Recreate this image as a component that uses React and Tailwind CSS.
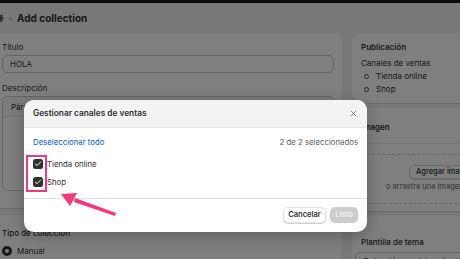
import { Check, X } from 'lucide-react'

function Card({ className = '', children }) {
  return (
    <div className={`bg-white rounded-[8px] shadow-[0_1px_0_rgba(0,0,0,0.12)] ${className}`}>
      {children}
    </div>
  )
}

function Checkbox() {
  return (
    <div className="w-[10px] h-[10px] rounded-[2.5px] bg-[#303030] flex items-center justify-center">
      <Check size={8} strokeWidth={3} className="text-white" />
    </div>
  )
}

export default function App() {
  const channels = ['Tienda online', 'Shop']

  return (
    <div className="relative w-[460px] h-[259px] overflow-hidden bg-[#f1f1f1] font-['Inter',sans-serif] text-[#303030]">
      {/* Top bar */}
      <div className="h-[3px] bg-[#1a1a1a]" />

      {/* Page header */}
      <header className="h-[30px] flex items-center">
        <svg width="10" height="10" viewBox="0 0 20 20" className="-ml-[6px] text-[#4a4a4a]" fill="currentColor">
          <path d="M10 6.5a3.5 3.5 0 1 0 0 7 3.5 3.5 0 0 0 0-7Zm0 2a1.5 1.5 0 1 1 0 3 1.5 1.5 0 0 1 0-3Z" />
          <path d="M8.5 1h3l.5 2.3 1.6.7 2-1.3 2.1 2.1-1.3 2 .7 1.6 2.3.5v3l-2.3.5-.7 1.6 1.3 2-2.1 2.1-2-1.3-1.6.7-.5 2.3h-3l-.5-2.3-1.6-.7-2 1.3-2.1-2.1 1.3-2-.7-1.6L1 11.5v-3l2.3-.5.7-1.6-1.3-2 2.1-2.1 2 1.3L8.4 3Z" fillOpacity="0.85" />
        </svg>
        <span className="ml-[5px] text-[8px] text-[#8a8a8a]">›</span>
        <h1 className="ml-[5px] text-[10px] font-bold text-[#303030]">Add collection</h1>
      </header>

      {/* Page body */}
      <div className="flex gap-[10px] -ml-[6px]">
        {/* Main column */}
        <div className="w-[348px] shrink-0 flex flex-col gap-[7px]">
          <Card className="h-[175px] px-[8px] pt-[9px]">
            <label className="block text-[8px] leading-[10px]">Título</label>
            <div className="mt-[3px] h-[18px] rounded-[5px] border border-[#c9c9c9] flex items-center px-[7px] text-[8px]">
              HOLA
            </div>
            <label className="block mt-[10px] text-[8px] leading-[10px]">Descripción</label>
            <div className="mt-[3px] h-[95px] rounded-[5px] border border-[#c9c9c9] overflow-hidden">
              <div className="h-[20px] bg-[#f7f7f7] border-b border-[#e3e3e3] flex items-center px-[8px] text-[8px]">
                Párrafo
              </div>
            </div>
          </Card>
          <Card className="h-[60px] px-[8px] pt-[13px]">
            <p className="text-[8px] leading-[10px] font-medium">Tipo de colección</p>
            <div className="mt-[7px] flex items-center gap-[5px]">
              <div className="w-[10px] h-[10px] rounded-full border-[3px] border-[#303030] bg-white" />
              <span className="text-[8px]">Manual</span>
            </div>
          </Card>
        </div>

        {/* Side column */}
        <div className="w-[150px] shrink-0 flex flex-col gap-[5px]">
          <Card className="h-[70px] px-[9px] pt-[9px]">
            <p className="text-[8px] leading-[10px] font-semibold">Publicación</p>
            <p className="mt-[6px] text-[8px] leading-[10px]">Canales de ventas</p>
            <ul className="mt-[3px] flex flex-col gap-[3px]">
              {['Tienda online', 'Shop'].map((c) => (
                <li key={c} className="flex items-center gap-[7px] pl-[3px] text-[8px] leading-[10px]">
                  <span className="w-[5px] h-[5px] rounded-full border border-[#4a4a4a]" />
                  {c}
                </li>
              ))}
            </ul>
          </Card>
          <Card className="h-[103px]">
            <div className="h-[36px] border-b border-[#ebebeb] px-[9px] flex items-center pt-[3px]">
              <p className="text-[8px] font-semibold">Imagen</p>
            </div>
            <div className="mx-[9px] mt-[10px] h-[50px] rounded-[6px] border border-dashed border-[#c9c9c9] pt-[10px] pl-[24px]">
              <div className="ml-[23px] w-fit h-[14px] px-[6px] rounded-[5px] bg-white border border-[#d4d4d4] shadow-[0_1px_0_rgba(0,0,0,0.15)] text-[7.5px] font-medium flex items-center whitespace-nowrap">
                Agregar imagen
              </div>
              <p className="mt-[3px] text-[7.5px] leading-[10px] text-[#616161] whitespace-nowrap">o arrastra una imagen para subirla</p>
            </div>
          </Card>
          <Card className="h-[60px] px-[9px] pt-[21px]">
            <p className="text-[8px] leading-[10px] font-medium">Plantilla de tema</p>
            <div className="mt-[5px] -ml-[6px] h-[18px] rounded-[5px] border border-[#c9c9c9] flex items-center px-[7px] text-[8px] whitespace-nowrap">
              Colección predeterminada
            </div>
          </Card>
        </div>
      </div>

      {/* Backdrop */}
      <div className="absolute inset-0 bg-black/50" />

      {/* Modal */}
      <div className="absolute left-[24px] top-[100px] w-[343px] h-[132px] bg-white rounded-[10px] overflow-hidden flex flex-col shadow-[0_4px_16px_rgba(0,0,0,0.25)]">
        <div className="h-[28px] shrink-0 bg-[#f3f3f3] border-b border-[#e3e3e3] flex items-center justify-between pl-[9px] pr-[9px]">
          <span className="text-[8.3px] font-semibold text-[#303030]">Gestionar canales de ventas</span>
          <X size={9} strokeWidth={2} className="text-[#616161]" />
        </div>
        <div className="h-[71px] shrink-0 border-b border-[#e3e3e3] px-[9px] pt-[9px]">
          <div className="h-[10px] flex items-center justify-between text-[7.8px] leading-[10px]">
            <span className="text-[#005bd3]">Deseleccionar todo</span>
            <span className="text-[#616161]">2 de 2 seleccionados</span>
          </div>
          <div className="mt-[12px] flex flex-col gap-[8px]">
            {channels.map((c) => (
              <div key={c} className="h-[10px] flex items-center gap-[4px] text-[7.8px] leading-[10px]">
                <Checkbox />
                <span>{c}</span>
              </div>
            ))}
          </div>
        </div>
        <div className="flex-1 flex justify-end items-start pt-[8px] pr-[9px] gap-[4px]">
          <button className="h-[16px] w-[43px] rounded-[5px] bg-white border border-[#e3e3e3] shadow-[0_1px_0_rgba(0,0,0,0.18)] text-[7.5px] font-semibold text-[#303030]">
            Cancelar
          </button>
          <button className="h-[16px] w-[28px] rounded-[5px] bg-[#cccccc] text-[7.5px] font-semibold text-[#f2f2f2]">
            Listo
          </button>
        </div>
      </div>

      {/* Highlight box */}
      <div className="absolute left-[26px] top-[155px] w-[21px] h-[37px] border-2 border-[#f7357b]" />

      {/* Arrow */}
      <svg className="absolute inset-0 pointer-events-none" width="460" height="259" viewBox="0 0 460 259">
        <polygon points="116,213 115,216 74,202 75,198" fill="#f7357b" />
        <polygon points="61,194 77,193 70,206" fill="#f7357b" />
      </svg>
    </div>
  )
}
